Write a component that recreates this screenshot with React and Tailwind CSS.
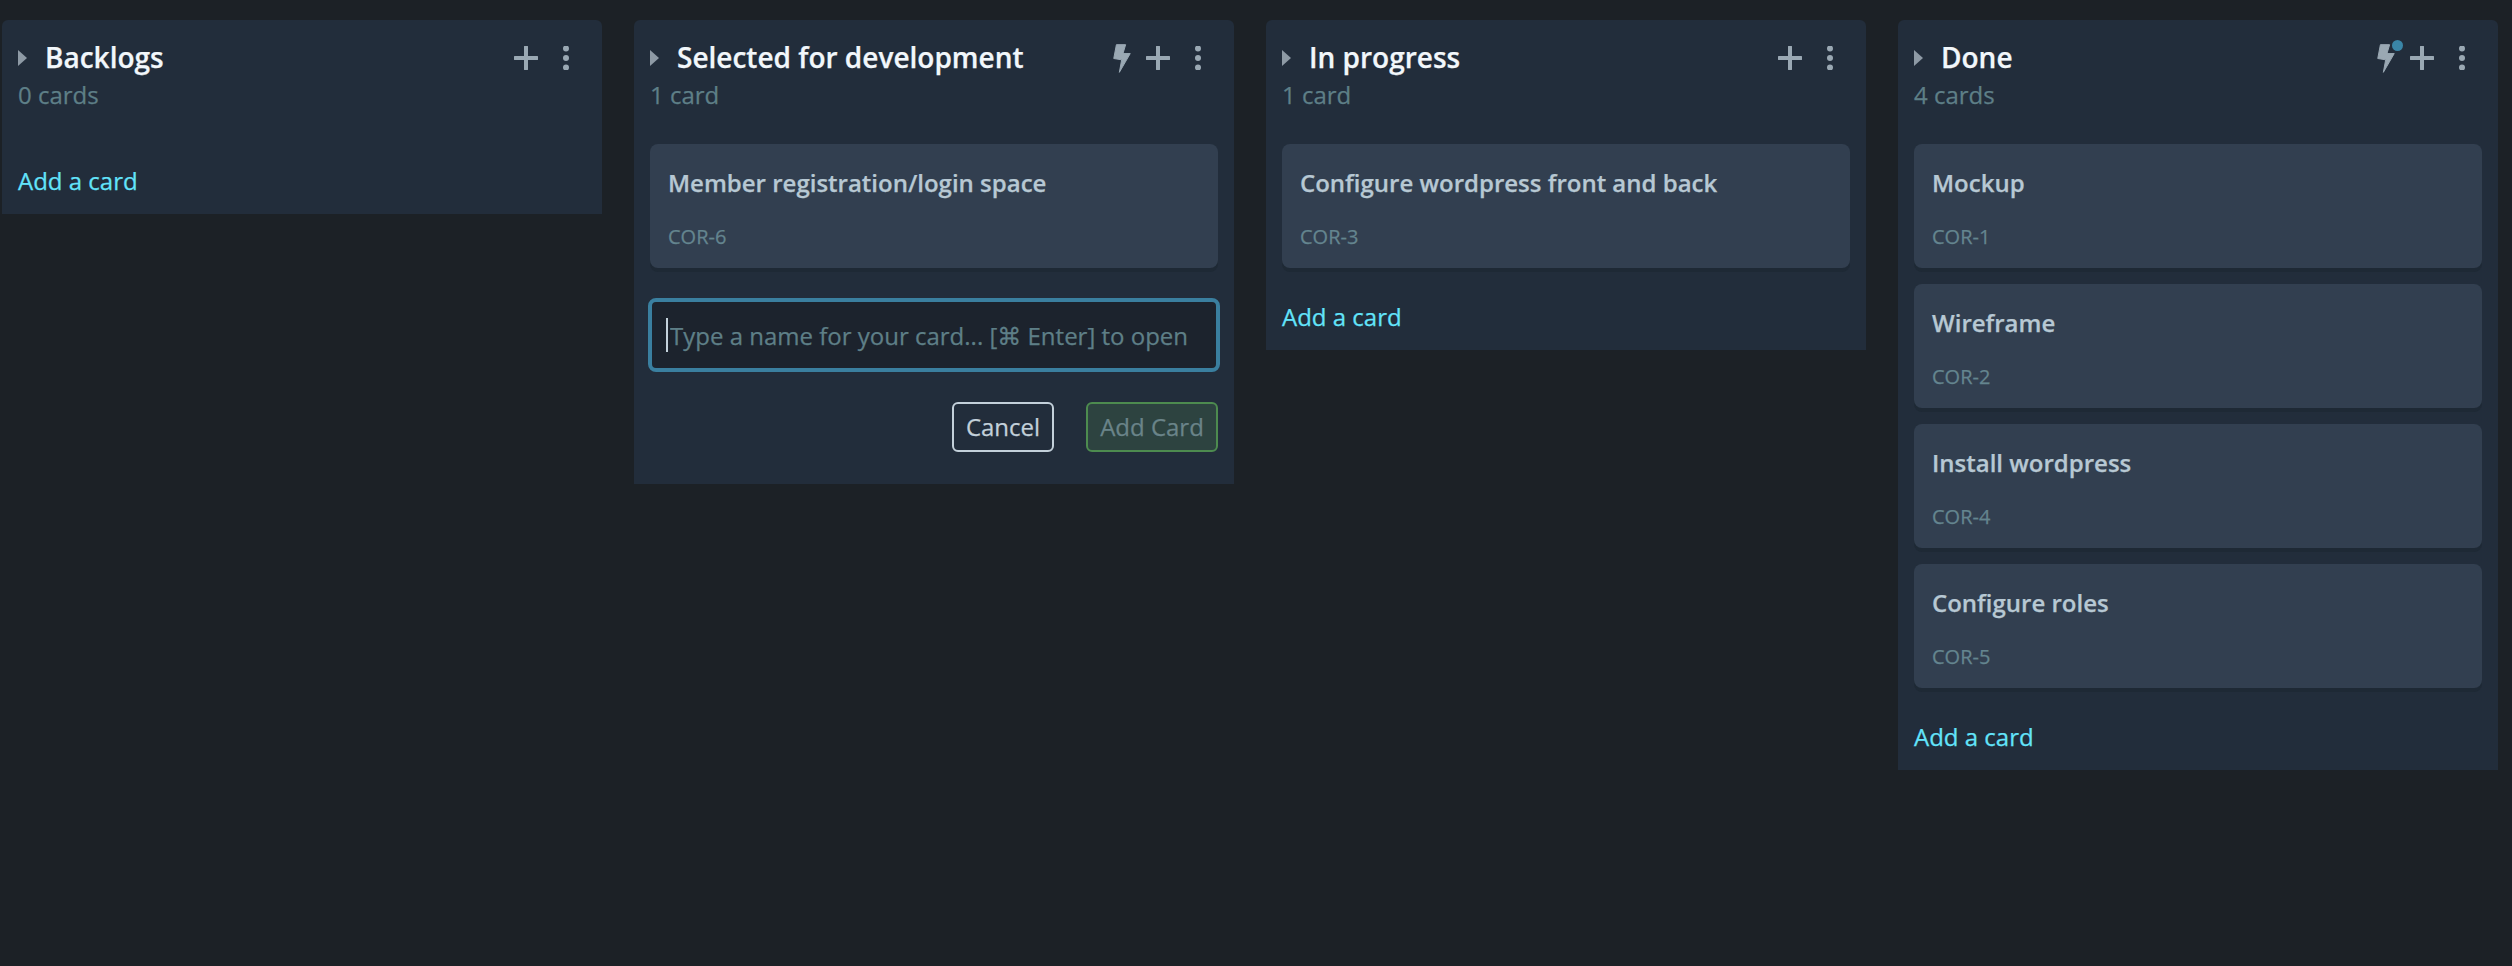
import React from 'react';

const columns = [
    { id: 1, title: 'Backlogs', count: '0 cards', cards: [] },
    { id: 2, title: 'Selected for development', count: '1 card', bolt: true, adding: true, cards: [{ name: 'Member registration/login space', code: 'COR-6' }] },
    { id: 3, title: 'In progress', count: '1 card', cards: [{ name: 'Configure wordpress front and back', code: 'COR-3' }] },
    {
        id: 4, title: 'Done', count: '4 cards', bolt: true, dot: true, cards: [
            { name: 'Mockup', code: 'COR-1' },
            { name: 'Wireframe', code: 'COR-2' },
            { name: 'Install wordpress', code: 'COR-4' },
            { name: 'Configure roles', code: 'COR-5' },
        ]
    },
];

const Bolt = ({ dot }) => (
    <div className="relative w-[17px] h-[28px]">
        <svg viewBox="-2 -2 54 88" className="w-[18px] h-[29px] fill-[#9aa8b3] stroke-[#9aa8b3]">
            <path d="M8 0 H36 L28 27 H50 L17 84 L24 46 L0 42 Z" strokeWidth="3" strokeLinejoin="round" />
        </svg>
        {dot && <span className="absolute -top-[4px] -right-[9px] w-[11px] h-[11px] rounded-full bg-[#3a86a8]"></span>}
    </div>
);

const Plus = () => (
    <svg viewBox="0 0 24 24" className="w-6 h-6 stroke-[#9aa8b3] fill-none">
        <path d="M12 1 V23 M1 12 H23" strokeWidth="4" strokeLinecap="round" />
    </svg>
);

const Dots = () => (
    <svg viewBox="0 0 24 24" className="w-6 h-6 fill-[#9aa8b3]">
        <circle cx="12" cy="2.5" r="3" />
        <circle cx="12" cy="12" r="3" />
        <circle cx="12" cy="21.5" r="3" />
    </svg>
);

const Card = ({ card }) => (
    <div className="h-[124px] mb-4 rounded-lg bg-[#323f50] shadow-[0_4px_0_#1e2935] pl-[18px]">
        <div className="pt-[21px] h-[75px] text-[24px] leading-9 font-semibold text-[#b7c8d3]">{card.name}</div>
        <div className="text-[20px] leading-9 text-[#64858f]">{card.code}</div>
    </div>
);

const AddForm = () => (
    <div className="pt-[14px] pb-8">
        <div className="relative -mx-0.5">
            <input
                readOnly
                placeholder="Type a name for your card... [⌘ Enter] to open"
                className="w-full h-[74px] pl-[18px] pr-4 rounded-lg border-4 border-[#3a7f9f] bg-[#1c232d] text-[24px] outline-none placeholder:text-[#5e7f87]"
            />
            <span className="absolute left-[18px] top-5 w-[2px] h-[34px] bg-[#c4d2dc]"></span>
        </div>
        <div className="flex justify-end gap-8 mt-[30px]">
            <button className="w-[102px] h-[50px] rounded-md border-2 border-[#c3d0da] text-[24px] text-[#c3d0da]">Cancel</button>
            <button className="w-[132px] h-[50px] rounded-md border-2 border-[#4d8b4f] bg-[#2d4340] text-[24px] text-[#6a8489]">Add Card</button>
        </div>
    </div>
);

const Column = ({ column }) => (
    <div className="w-[600px] shrink-0 rounded-t-md bg-[#222d3b] px-4">
        <div className="flex items-center h-9 mt-5 pr-2">
            <svg viewBox="0 0 10 18" className="w-[9px] h-[18px] fill-[#8e9aa5] shrink-0">
                <path d="M0 0 L10 9 L0 18 Z" />
            </svg>
            <div className="ml-[18px] grow -mt-[3px] text-[28px] leading-9 font-semibold text-[#f2f7fb]">{column.title}</div>
            <div className="flex items-center gap-4">
                {column.bolt && <Bolt dot={column.dot} />}
                <Plus />
                <Dots />
            </div>
        </div>
        <div className="h-[38px] text-[24px] leading-[38px] text-[#5e7f87]">{column.count}</div>
        <div className="pt-[30px] min-h-[34px]">
            {column.cards.map(card => <Card key={card.code} card={card} />)}
        </div>
        {column.adding
            ? <AddForm />
            : <div className="h-[66px] text-[24px] leading-[66px] text-[#62e4fa]">Add a card</div>}
    </div>
);

export default function App() {
    return (
        <div className="min-h-screen bg-[#1c2126] pl-[2px] pt-5 flex items-start gap-8 font-['Open_Sans','DejaVu_Sans',sans-serif] [-webkit-text-stroke:0.25px]">
            {columns.map(column => <Column key={column.id} column={column} />)}
        </div>
    );
}
